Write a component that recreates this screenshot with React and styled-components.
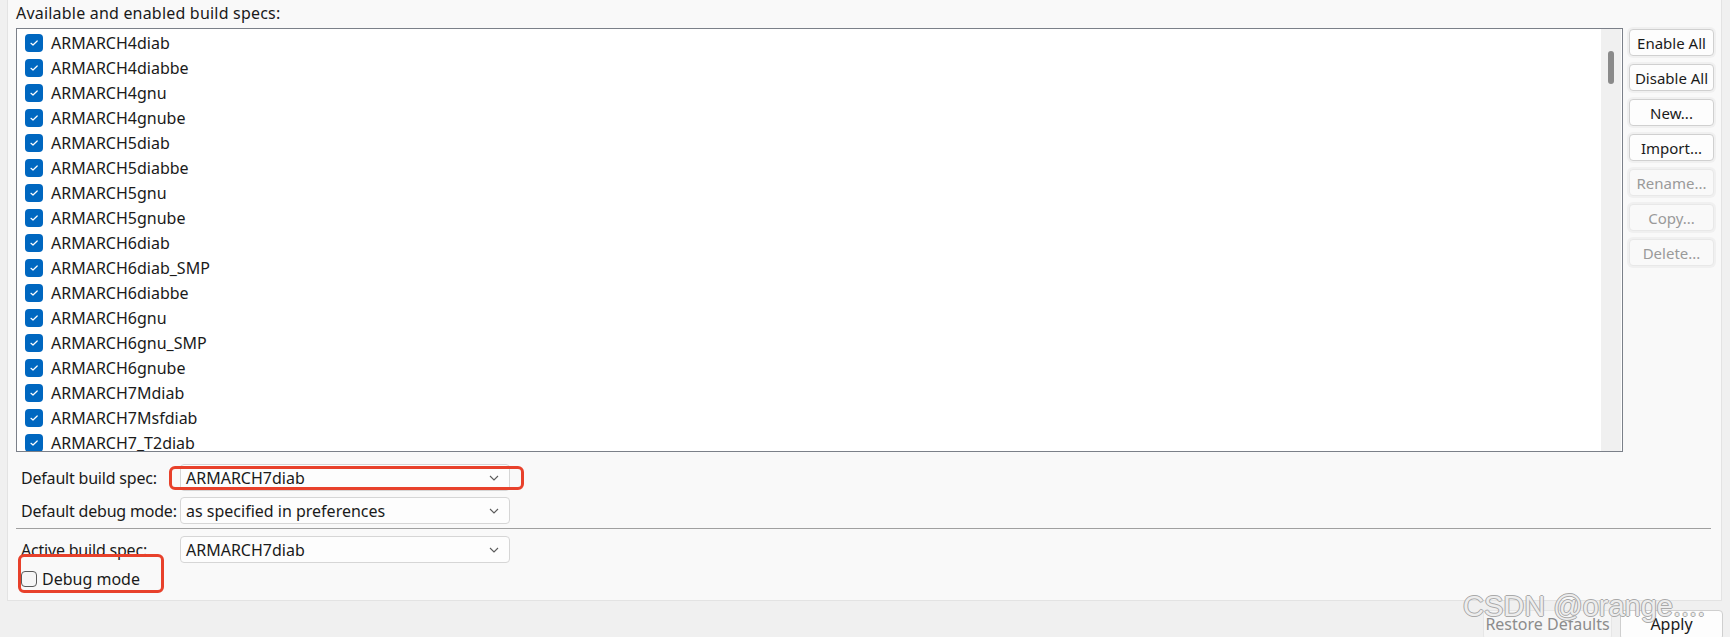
import React from 'react';
import styled, { createGlobalStyle } from 'styled-components';

const GlobalStyle = createGlobalStyle`
  html, body {
    margin: 0;
    padding: 0;
    background: #f0f0f0;
    overflow: hidden;
  }
  body {
    font-family: 'Noto Sans', 'Liberation Sans', sans-serif;
    font-size: 16px;
    color: #1a1a1a;
  }
`;

const Page = styled.div`
  position: relative;
  width: 1730px;
  height: 637px;
  background: #f0f0f0;
`;

const Panel = styled.div`
  position: relative;
  box-sizing: border-box;
  margin-left: 7px;
  width: 1715px;
  height: 601px;
  background: #f9f9f9;
  border: 1px solid #e3e3e3;
  border-top: none;
  padding-left: 8px;
`;

const Title = styled.div`
  height: 28px;
  line-height: 26px;
  letter-spacing: 0.2px;
`;

const MainRow = styled.div`
  display: flex;
  gap: 6px;
`;

const ListBox = styled.div`
  box-sizing: border-box;
  width: 1607px;
  height: 424px;
  background: #fff;
  border: 1px solid #7b8089;
  display: flex;
  overflow: hidden;
`;

const Items = styled.div`
  flex: 1;
  padding-top: 1px;
`;

const Row = styled.div`
  height: 25px;
  display: flex;
  align-items: center;
  padding-left: 8px;
  gap: 8px;
  white-space: nowrap;
`;

const CheckBox = styled.span`
  box-sizing: border-box;
  width: ${(p) => p.size}px;
  height: ${(p) => p.size}px;
  border-radius: 4px;
  flex: none;
  display: flex;
  align-items: center;
  justify-content: center;
  background: ${(p) => (p.checked ? '#0067c0' : '#f6f6f6')};
  border: ${(p) => (p.checked ? 'none' : '1px solid #5a5a5a')};
`;

const ScrollTrack = styled.div`
  width: 20px;
  margin-right: 1px;
  background: #f0f0f0;
  display: flex;
  justify-content: center;
  padding-top: 22px;
`;

const Thumb = styled.div`
  width: 6px;
  height: 33px;
  border-radius: 3px;
  background: #8a8a8a;
`;

const ButtonColumn = styled.div`
  display: flex;
  flex-direction: column;
  gap: 8px;
  padding-top: 1px;
`;

const SideButton = styled.button`
  box-sizing: border-box;
  width: 85px;
  height: 27px;
  padding: 0;
  font-family: inherit;
  font-size: 15px;
  border-radius: 4px;
  border: 1px solid ${(p) => (p.disabled ? '#e8e8e8' : '#d0d0d0')};
  background: ${(p) => (p.disabled ? '#f9f9f9' : '#fdfdfd')};
  color: ${(p) => (p.disabled ? '#9a9a9a' : '#1a1a1a')};
  box-shadow: 0 0 0 2px #f0f0f0;
`;

const Form = styled.div`
  padding-top: 12px;
  padding-left: 5px;
`;

const FieldRow = styled.div`
  display: grid;
  grid-template-columns: 159px 330px;
  align-items: center;
  height: 27px;
  margin-bottom: ${(p) => p.gap || 0}px;
`;

const Label = styled.span`
  white-space: nowrap;
  letter-spacing: -0.2px;
`;

const Select = styled.div`
  box-sizing: border-box;
  height: 27px;
  border: 1px solid #d6d6d6;
  border-radius: 4px;
  background: #fdfdfd;
  display: flex;
  align-items: center;
  justify-content: space-between;
  padding: 0 10px 0 5px;
`;

const Separator = styled.div`
  height: 1px;
  background: #a0a0a0;
  margin: 4px 10px 7px -5px;
`;

const CheckRow = styled.label`
  display: flex;
  align-items: center;
  gap: 5px;
  margin-top: 7px;
  height: 18px;
`;

const Annotation = styled.div`
  position: absolute;
  box-sizing: border-box;
  border: 3px solid #e8412b;
  border-radius: 6px;
  pointer-events: none;
`;

const BottomBar = styled.div`
  display: flex;
  justify-content: flex-end;
  gap: 8px;
  padding: 9px 7px 0 0;
`;

const FooterButton = styled.button`
  box-sizing: border-box;
  width: ${(p) => p.w}px;
  height: 30px;
  padding: 0 0 3px;
  font-family: inherit;
  font-size: 16px;
  border-radius: 4px;
  border: 1px solid ${(p) => (p.disabled ? '#e6e6e6' : '#cfcfcf')};
  background: ${(p) => (p.disabled ? '#f6f6f6' : '#fdfdfd')};
  color: ${(p) => (p.disabled ? '#8c8c8c' : '#1a1a1a')};
`;

const Watermark = styled.div`
  position: absolute;
  left: 1463px;
  top: 590px;
  font-family: 'Liberation Sans', sans-serif;
  font-size: 29px;
  color: rgba(250, 250, 250, 0.85);
  text-shadow: -1px 0 #a9a9a9, 1px 0 #a9a9a9, 0 -1px #a9a9a9, 0 1px #a9a9a9;
  white-space: nowrap;
  pointer-events: none;
`;

const specs = [
  'ARMARCH4diab',
  'ARMARCH4diabbe',
  'ARMARCH4gnu',
  'ARMARCH4gnube',
  'ARMARCH5diab',
  'ARMARCH5diabbe',
  'ARMARCH5gnu',
  'ARMARCH5gnube',
  'ARMARCH6diab',
  'ARMARCH6diab_SMP',
  'ARMARCH6diabbe',
  'ARMARCH6gnu',
  'ARMARCH6gnu_SMP',
  'ARMARCH6gnube',
  'ARMARCH7Mdiab',
  'ARMARCH7Msfdiab',
  'ARMARCH7_T2diab',
  'ARMARCH7diab',
];

const sideButtons = [
  { label: 'Enable All' },
  { label: 'Disable All' },
  { label: 'New...' },
  { label: 'Import...' },
  { label: 'Rename...', disabled: true },
  { label: 'Copy...', disabled: true },
  { label: 'Delete...', disabled: true },
];

const Tick = () => (
  <svg width="10" height="8" viewBox="0 0 10 8">
    <path d="M2 4.3 L4 6 L8.2 2" fill="none" stroke="#fff" strokeWidth="1.2" strokeLinecap="round" strokeLinejoin="round" />
  </svg>
);

const Chevron = () => (
  <svg width="10" height="6" viewBox="0 0 10 6">
    <path d="M1 1 L5 5 L9 1" fill="none" stroke="#5c5c5c" strokeWidth="1.1" />
  </svg>
);

const App = () => (
  <Page>
    <GlobalStyle />
    <Panel>
      <Title>Available and enabled build specs:</Title>
      <MainRow>
        <ListBox>
          <Items>
            {specs.map((name) => (
              <Row key={name}>
                <CheckBox size={18} checked>
                  <Tick />
                </CheckBox>
                {name}
              </Row>
            ))}
          </Items>
          <ScrollTrack>
            <Thumb />
          </ScrollTrack>
        </ListBox>
        <ButtonColumn>
          {sideButtons.map((b) => (
            <SideButton key={b.label} disabled={b.disabled}>
              {b.label}
            </SideButton>
          ))}
        </ButtonColumn>
      </MainRow>
      <Form>
        <FieldRow gap={6}>
          <Label>Default build spec:</Label>
          <Select>
            ARMARCH7diab
            <Chevron />
          </Select>
        </FieldRow>
        <FieldRow>
          <Label>Default debug mode:</Label>
          <Select>
            as specified in preferences
            <Chevron />
          </Select>
        </FieldRow>
        <Separator />
        <FieldRow>
          <Label>Active build spec:</Label>
          <Select>
            ARMARCH7diab
            <Chevron />
          </Select>
        </FieldRow>
        <CheckRow>
          <CheckBox size={16} />
          Debug mode
        </CheckRow>
      </Form>
      <Annotation style={{ left: 161, top: 466, width: 355, height: 24 }} />
      <Annotation style={{ left: 10, top: 554, width: 146, height: 39 }} />
    </Panel>
    <BottomBar>
      <FooterButton w={129} disabled>
        Restore Defaults
      </FooterButton>
      <FooterButton w={103}>Apply</FooterButton>
    </BottomBar>
    <Watermark>CSDN @orange....</Watermark>
  </Page>
);

export default App;
